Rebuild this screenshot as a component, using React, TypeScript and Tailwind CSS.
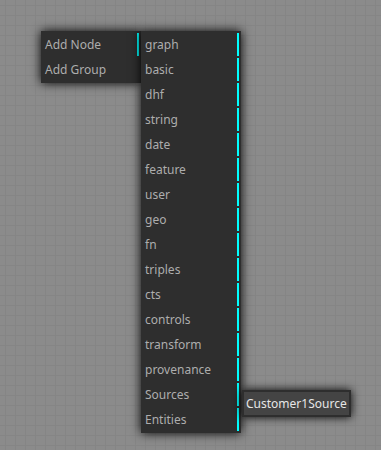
import React from 'react';

type Entry = { label: string; submenu?: boolean; active?: boolean };

const rootEntries: Entry[] = [
  { label: 'Add Node', submenu: true },
  { label: 'Add Group' },
];

const categories = [
  'graph', 'basic', 'dhf', 'string', 'date', 'feature', 'user', 'geo',
  'fn', 'triples', 'cts', 'controls', 'transform', 'provenance', 'Sources', 'Entities',
];

const sourceEntries: Entry[] = [{ label: 'Customer1Source', active: true }];

function ContextMenu({ entries, className }: { entries: Entry[]; className: string }) {
  return (
    <div
      className={`absolute flex flex-col gap-[2px] p-[2px] bg-[#2e2e2e] shadow-[0_0_10px_black] ${className}`}
    >
      {entries.map((e) => (
        <div
          key={e.label}
          className={`h-[23px] leading-[23px] pl-[2px] pr-[2px] whitespace-nowrap text-[12px] ${
            e.submenu ? 'border-r-2 border-[#00ffff]' : ''
          } ${e.active ? 'bg-[#444444] text-[#e6e6e6]' : 'text-[#adadad]'}`}
        >
          {e.label}
        </div>
      ))}
    </div>
  );
}

export default function App() {
  return (
    <div
      className="relative w-[381px] h-[450px] overflow-hidden bg-[#8b8b8b] font-['Noto_Sans',sans-serif]"
      style={{
        backgroundImage:
          'linear-gradient(to right, #858585 1px, transparent 1px), linear-gradient(to bottom, #858585 1px, transparent 1px)',
        backgroundSize: '10px 10px',
        backgroundPosition: '5px 5px',
      }}
    >
      <ContextMenu entries={rootEntries} className="left-[41px] top-[31px] w-[100px] z-10" />
      <ContextMenu
        entries={categories.map((c) => ({ label: c, submenu: true }))}
        className="left-[141px] top-[31px] w-[100px] z-20"
      />
      <ContextMenu entries={sourceEntries} className="left-[242px] top-[390px] z-30" />
    </div>
  );
}
